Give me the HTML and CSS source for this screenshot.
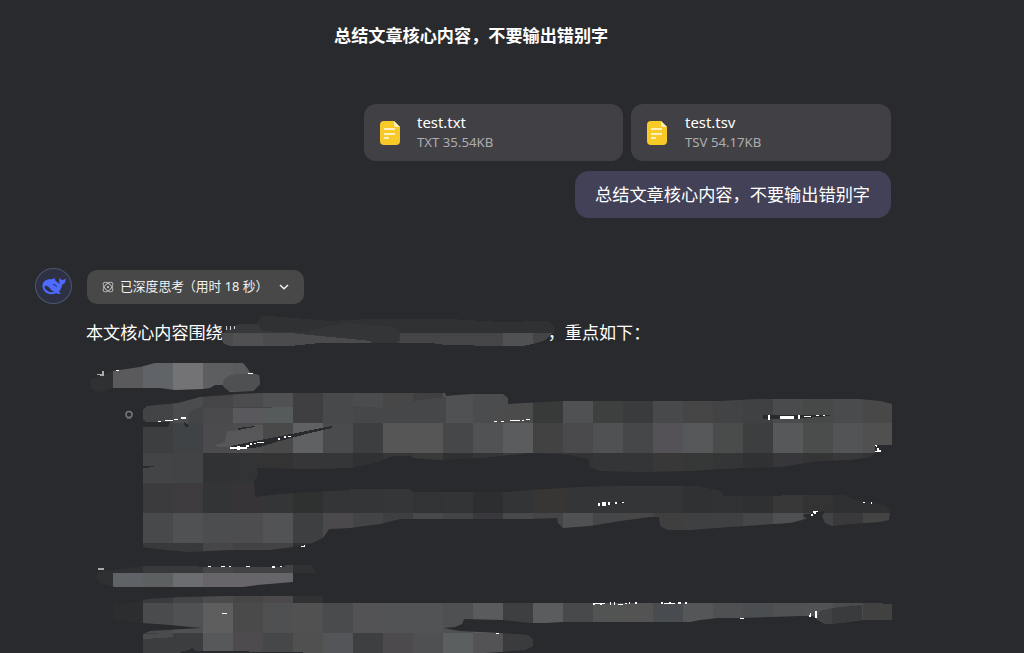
FILE: index.html
```
<!DOCTYPE html>
<html lang="zh-CN">
<head>
<meta charset="utf-8">
<title>总结文章核心内容</title>
<link rel="stylesheet" href="styles.css">
</head>
<body>
<header class="title">总结文章核心内容，不要输出错别字</header>
<main class="chat">
  <section class="user">
    <div class="files">
      <div class="file">
        <svg class="file-icon" width="20" height="24" viewBox="0 0 20 24"><path d="M4 0H14L20 6V20Q20 24 16 24H4Q0 24 0 20V4Q0 0 4 0Z" fill="#f8ca27"/><path d="M14 0L20 6H16Q14 6 14 4Z" fill="#fff0ba"/><path d="M4 8H15M4 13H15M4 17H9" stroke="#fff0c0" stroke-width="1.8"/></svg>
        <div><div class="name">test.txt</div><div class="meta">TXT 35.54KB</div></div>
      </div>
      <div class="file">
        <svg class="file-icon" width="20" height="24" viewBox="0 0 20 24"><path d="M4 0H14L20 6V20Q20 24 16 24H4Q0 24 0 20V4Q0 0 4 0Z" fill="#f8ca27"/><path d="M14 0L20 6H16Q14 6 14 4Z" fill="#fff0ba"/><path d="M4 8H15M4 13H15M4 17H9" stroke="#fff0c0" stroke-width="1.8"/></svg>
        <div><div class="name">test.tsv</div><div class="meta">TSV 54.17KB</div></div>
      </div>
    </div>
    <div class="bubble">总结文章核心内容，不要输出错别字</div>
  </section>
  <section class="reply">
    <div class="avatar">
      <svg width="24" height="19" viewBox="0 0 24 19"><path d="M0.5 8C1 4.500 4.500 2 8.500 2.300C10.500 2.500 11.500 1 13 1.300C12.300 2.500 13.200 3.800 15 5C16.300 6 17 6.800 17.800 6.500C16.800 4.300 17 2.500 18 .8C18.400 2.300 19.200 2.800 20.300 3C21.600 3.100 22.700 2.500 23.700 1.300C23.900 4.800 22.700 6.800 20.200 7.600C19.800 10.700 18.500 13 16.800 14.700L18.900 16.500C17.200 17.300 15.600 16.900 14.300 16C10 18.400 4.500 17.400 2 13.500C.8 11.600.2 9.800.5 8Z" fill="#4d6bfe"/><path d="M2.500 9.500C4 7.600 6.600 9.200 8.300 11.800C9.600 13.600 11 14.400 12.500 14.600C9.800 15.700 6.700 15.300 4.600 13.300C3.300 12 2.500 10.900 2.500 9.500Z" fill="#2e3044"/><path d="M11 7.700Q13.500 6.700 14.600 10" fill="none" stroke="#2e3044"/></svg>
    </div>
    <div class="content">
      <div class="think">
        <svg width="12" height="12" viewBox="0 0 12 12" fill="none" stroke="#c8c8c8" stroke-width="1"><ellipse cx="6" cy="6" rx="6" ry="3.200" transform="rotate(45 6 6)"/><ellipse cx="6" cy="6" rx="6" ry="3.200" transform="rotate(-45 6 6)"/><circle cx="6" cy="6" r=".7" fill="#d8d8d8"/></svg>
        <span class="think-text">已深度思考</span><span class="think-time">（用时 18 秒）</span>
        <svg class="chevron" width="10" height="6" viewBox="0 0 10 6"><path d="M1 1L5 4.800L9 1" fill="none" stroke="#f0f0f0" stroke-width="1.500"/></svg>
      </div>
      <p class="answer"><span>本文核心内容围绕</span><span class="tail">，重点如下：</span></p>
    </div>
  </section>
</main>
<svg class="mosaic" width="1024" height="653" viewBox="0 0 1024 653" shape-rendering="crispEdges">
  <defs>
    <clipPath id="strokes">
      <path d="M91 380L100 376L113 371L140 367L155 363H243L248 369L250 373L259 375L260 384L253 391L230 392L224 387L223 385H215L210 388L203 389L175 390L160 388H113L105 391L96 392L91 388Z"/>
      <path d="M143 410L147 406L178 403L200 397L240 394L259 393H445L446 396L457 395L473 394H503L508 398V404L525 403L563 401H720L758 399H859L880 401L892 404V445H875V453L870 457L850 460L820 461L800 464L780 467L740 468L690 471L640 472L600 471L590 467L588 459L570 455L530 453L480 458L440 460L413 458L410 456H393L375 463L350 468L310 469L257 468L258 475L254 482L255 497L280 494L310 492L350 490V489H410L413 492H510L530 490L580 487L620 486H698L720 491L724 496H782V495H845L855 500L885 505L890 511L889 520L880 522L850 524L832 526L825 523L822 516L825 512L810 518L790 523L760 525L730 527L690 530H668L660 526L659 517H650L620 521L590 526L563 528L558 523L557 518L530 519H400L380 524L350 528L329 529L323 538L310 544L293 547L270 550H230L190 552L165 550L143 547V427H168L170 422H146L143 419Z"/>
      <path d="M97 572L143 566H198L199 567H285V565H310L315 570V573H293V582L257 585L243 587H115L100 583L96 578Z"/>
      <path d="M113 603L131 603L148 599L182 597L229 596H323V603H883V604H892V620H862L840 623L825 624L818 620L813 616H800L740 618H718L700 620L690 622H563L545 623H530L503 620L464 619L462 624L455 627L443 628L460 631L500 633L528 635L533 639V646L525 650L500 652L485 653H143V634L150 631L184 629L202 628L170 625L143 623L113 620Z"/>
    </clipPath>
  </defs>
  <path d="M257 322L262 316H270L330 321L370 319H450L500 322L548 321L554 326V331L545 340L533 344L522 346H503L445 345L431 343H320L290 346H230L223 343L221 335L228 328L240 324H258Z" fill="#37383a"/>
  <path d="M257 322L262 316H270L330 321L370 319H450L500 322L548 321L554 326V333H400L395 327L345 323L310 333L262 331Z" fill="#303133"/>
  <path d="M300 333L345 323L395 327L400 333L396 343H371V341Z" fill="#343537"/>
  <path d="M221 333H290L371 341V343H320L290 346H230L223 343Z" fill="#4b4b4d"/>
  <path d="M233 333H263V346H233Z" fill="#505052"/>
  <path d="M400 333H552L545 340L533 344L522 346H503L445 345L431 343H397L400 340Z" fill="#454547"/>
  <path d="M503 333H533V344L522 346H503Z" fill="#505153"/>
  <g clip-path="url(#strokes)">
    <rect width="1024" height="653" fill="#2f3032"/>
    <g id="cells"></g>
    <path d="M223 382Q225 374 242 374H260V391H223Z" fill="#4f5052"/>
    <path d="M188 414Q195 406 210 407H290V423H188Z" fill="#434547"/>
    <path d="M203 408H233V423H203Z" fill="#4a494b"/>
    <path d="M233 408H263V423H233Z" fill="#59585c"/>
    <path d="M263 408L280 407H293V423H263Z" fill="#555a5b"/>
    <path d="M353 406L383 408L413 401L446 397V423H353Z" fill="#464749"/>
    <path d="M227 431L233 431V447H217L215 445L225 442Z" fill="#57575a"/>
    <path d="M233 431L256 425H263V447H233Z" fill="#57575a"/>
    <path d="M143 634L173 633V637L160 638L143 639Z" fill="#4a4b4d"/>
    <path d="M832 608L855 605V624H822L817 619L820 611Z" fill="#414244"/>
    <path d="M832 608L862 605V624H832Z" fill="#3a3b3d"/>
  </g>
  <g fill="#292a2d">
    <path d="M230 446L245 443L332 426V428L310 433L280 441L260 447L235 450ZM184 422L190 426L185 427ZM238 428L255 426V427L238 430ZM763 415H830V416L795 419H763ZM143 466H154V467L143 468ZM802 515L825 511L818 518L808 519ZM595 506L622 501V503L600 506ZM180 652L189 650L192 647L195 651L303 652V653H180Z"/>
  </g>
  <g fill="#fff">
    <path d="M158 421H161V422H158ZM165 420H173V421H165ZM174 419H178V420H174ZM181 417H186V419H181ZM230 447H247V449H230ZM237 446H240V450H237ZM246 445H249V447H246ZM250 443H252V445H250ZM254 443H256V444H254ZM257 442H264V443H257ZM278 438H280V440H278ZM284 436H286V438H284ZM288 436H291V437H288ZM494 421H497V422H494ZM501 421H504V422H501ZM510 420H520V421H510ZM522 420H524V421H522ZM526 419H530V420H526ZM768 415H770V420H768ZM780 416H794V419H780ZM798 415H800V419H798ZM804 416H811V417H804ZM816 415H819V416H816ZM823 415H825V416H823ZM875 445H877V447H876ZM877 448H879V450H881V452H875V451H877Z"/>
    <path d="M598 503H600V506H598ZM602 502H606V506H602ZM608 502H610V505H608ZM615 502H617V504H615ZM622 502H624V503H622ZM813 511H818V512H816V514H813V516H811V514H814ZM863 502H865V503H863ZM871 502H872V504H871ZM301 546H304V547H301ZM304 545H305V547H304ZM208 566H211V567H208ZM221 566H225V567H221ZM229 566H231V567H229ZM246 566H250V567H246ZM272 566H275V568H272ZM280 566H282V567H280ZM222 613H227V614H222ZM496 633H499V634H496Z"/>
    <path d="M593 603H605V604H602V605H600V604H595V605H593ZM610 602H611V605H610ZM614 602H615V605H614ZM618 604H623V605H618ZM625 603H627V604H625ZM629 602H630V604H629ZM635 602H637V604H635ZM661 602H663V604H661ZM664 603H675V604H664ZM669 602H671V603H669ZM678 602H681V604H678ZM685 602H687V604H685ZM740 618H744V619H740ZM809 615H811V617H809ZM810 613H811V615H810ZM815 611H817V618H815ZM116 370H119V371H116ZM248 373H253V374H248Z"/>
  </g>
  <path d="M97 374H102V376H100V375H97ZM102 371H104V376H102ZM98 568H104V570H98Z" fill="#aaa"/>
  <circle cx="129" cy="414.500" r="3" fill="none" stroke="#77797c" stroke-width="1.500" shape-rendering="auto"/>
  <path d="M127 418H131V419H127Z" fill="#5a5b5d"/>
  <path d="M226 326L227 330M230 326V330M234 326V329" stroke="#ccd" stroke-width="1"/>
</svg>
<script src="mosaic.js"></script>
</body>
</html>
```
FILE: styles.css
```
* { box-sizing: border-box; }
body {
  margin: 0;
  width: 1024px;
  height: 653px;
  overflow: hidden;
  position: relative;
  background: #292a2d;
  color: #fff;
  font-family: "Noto Sans", "Noto Sans CJK SC", sans-serif;
}
.title {
  padding: 22px 0 0 334px;
  height: 104px;
  font: 700 17.15px/25px "Noto Sans CJK SC", sans-serif;
}
.chat { width: 891px; }
.user { display: flex; flex-direction: column; align-items: flex-end; gap: 10px; }
.files { display: flex; gap: 8px; width: 527px; }
.file {
  display: flex;
  align-items: center;
  gap: 17px;
  flex: 0 0 259px;
  height: 57px;
  padding-left: 16px;
  border-radius: 12px;
  background: #414045;
}
.file:last-child { flex-basis: 260px; gap: 18px; }
.file-icon { flex: none; }
.file > div { padding-bottom: 1px; }
.name { font-size: 14.900px; line-height: 20px; }
.meta { font-size: 13.200px; line-height: 21px; color: #adadb0; }
.bubble {
  width: 316px;
  height: 47px;
  padding-left: 20px;
  border-radius: 14px;
  background: #424157;
  font: 17.200px/46px "Noto Sans CJK SC", sans-serif;
  white-space: nowrap;
}
.reply { display: flex; gap: 15px; padding: 50px 0 0 35px; }
.avatar {
  display: flex;
  align-items: center;
  justify-content: center;
  flex: none;
  width: 37px;
  height: 36px;
  border: 1px solid #4a5872;
  border-radius: 50%;
  background: #2e3044;
}
.content { padding-top: 2px; }
.think {
  display: flex;
  align-items: center;
  width: 217px;
  height: 34px;
  padding-left: 15px;
  border-radius: 10px;
  background: #484848;
  font: 12.800px/32px "Noto Sans", "Noto Sans CJK SC", sans-serif;
  color: #f2f2f2;
  white-space: nowrap;
}
.think span { height: 34px; }
.think-text { margin-left: 6px; }
.think-time { width: 88px; margin-left: -1px; }
.chevron { margin-left: 8px; }
.answer {
  display: flex;
  margin: 15px 0 0 -1px;
  font: 17.100px/26px "Noto Sans CJK SC", sans-serif;
  white-space: nowrap;
}
.tail { margin-left: 325px; }
.mosaic { position: absolute; left: 0; top: 0; pointer-events: none; }
```
FILE: mosaic.js
```
// Each row: top edge, height, first column, then one shade per 30px cell.
const rows = [
  [363, 30, 0, "5a595c 606468 737376 5d5e60 5a5b5d"],
  [393, 30, 1, "434446 4b4c4e 454447 4c4c4e 505153 3f3e41 48494b 4b4c4e 474747 404042 505153 4b4c4e 4b4b4b 383939 505153 3e3f3f 3a3b3d 48494b 454545 424345 404143 4a4b4d 474848 4a4b4d 484849"],
  [423, 30, 1, "3d3e40 404345 4b4b4d 4d4d50 4a494a 606163 4a4b4d 3d3e40 565656 555655 464749 515254 5b5c5e 424242 4a494c 505153 464749 545256 565759 4a4c4b 3d3e40 57585a 4b4d4c 535456 4f504f"],
  [453, 30, 1, "434446 424345 313234 323335 333333 363638 353638 303133 343537 39393a 2f3032 343537 3a3a3b 303133 323335 343537 343537 393838 363737 343536 303133 37363a 343434 38373a 333436"],
  [483, 30, 1, "3b3b3d 3d3b3e 323436 363437 343537 2f3030 343537 343537 353638 323335 333436 2d2e30 333435 373635 343537 343537 343537 343537 303133 313234 2f3032 383838 333333 2f3032 2f3032"],
  [513, 30, 1, "48494b 505153 4c4d4f 4d4d4f 525355 3e3f41 4b494c 434446 3e3f41 48494b 434446 39393d 48494b 454547 505153 464749 474747 3f3f3f 3f4042 3f4042 454648 4f5051 424345 39393b 444444"],
  [543, 30, 1, "38393b 38393b 464648 424244 434345 303133 303133"],
  [573, 20, 0, "5f6266 5c6061 6c6d70 676569 67656a 66666a"],
  [593, 10, 0, "2c2d2f 3a3b3d 434446 4b4b4d 464646 4b494c 303133"],
  [603, 30, 0, "2c2d2f 4a4b4d 505153 5d5e5d 4a4a4a 4f5052 505150 4a4b4d 535254 525355 525354 4f5052 5a5b5d 3e3f41 5b5c5e 48494b 525353 535353 484b4f 555658 4f5052 4a4e50 505153 515254 4b4c4e 424141"],
  [633, 20, 1, "3c3d3f 3c3d3f 57585a 4d4b4e 464749 4f504f 545558 3e3f41 4c4a4d 4f5052 5b5f60 535356 3a3b3d"]
];
const cells = document.getElementById("cells");
for (const [y, height, first, shades] of rows) {
  shades.split(" ").forEach((shade, i) => {
    const rect = document.createElementNS("http://www.w3.org/2000/svg", "rect");
    rect.setAttribute("x", 113 + (first + i) * 30);
    rect.setAttribute("y", y);
    rect.setAttribute("width", 30);
    rect.setAttribute("height", height);
    rect.setAttribute("fill", "#" + shade);
    cells.append(rect);
  });
}
```
